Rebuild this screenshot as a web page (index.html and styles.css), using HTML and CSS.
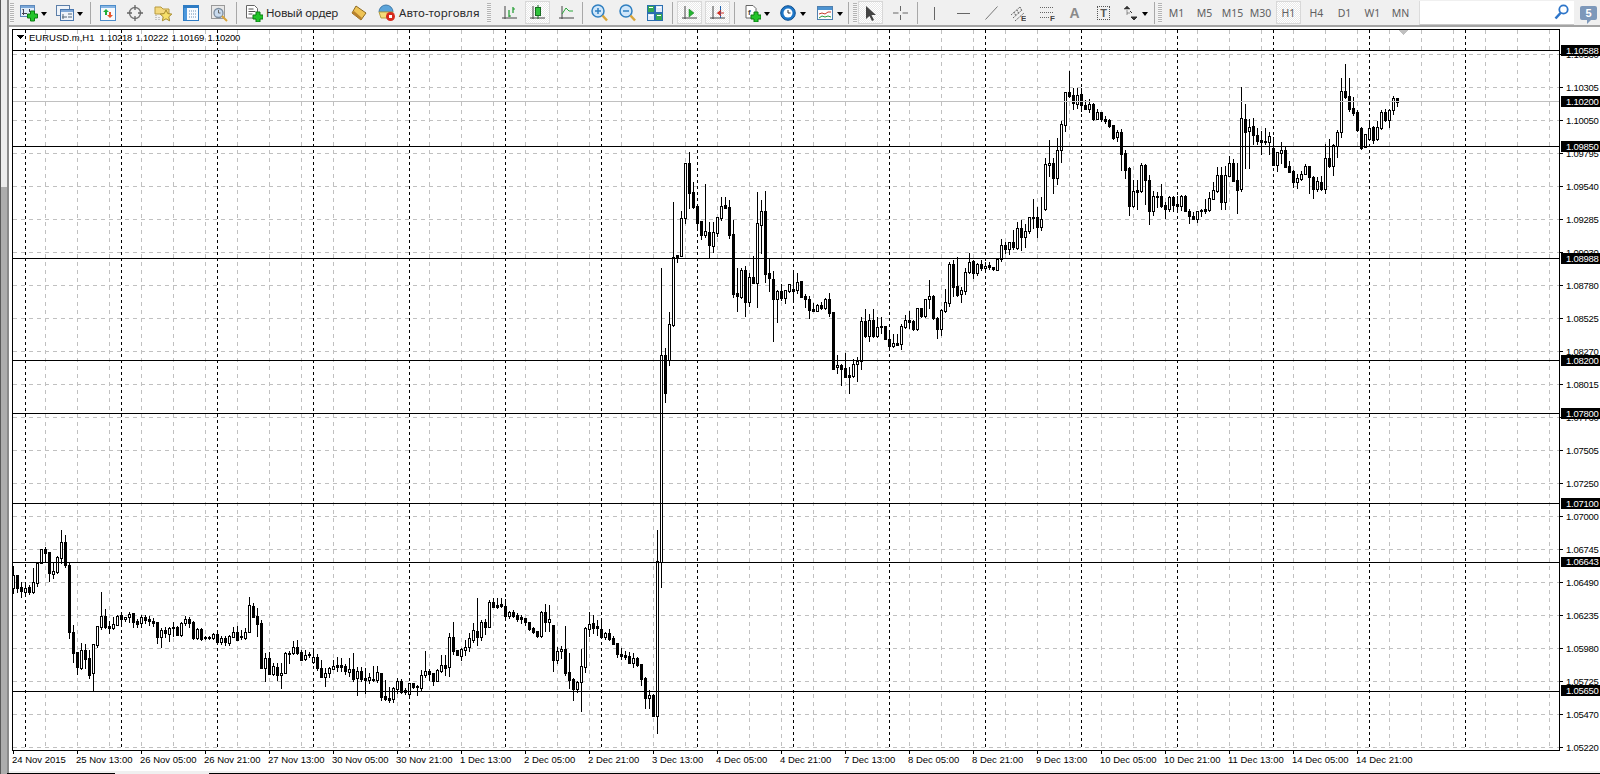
FILE: index.html
```html
<!DOCTYPE html>
<html lang="ru">
<head>
<meta charset="utf-8">
<title>EURUSD.m,H1</title>
<link rel="stylesheet" href="styles.css">
</head>
<body>
<div class="app">
  <div class="rail"><div class="rail-edge"></div><div class="rail-track"><div class="rail-thumb"></div></div><div class="rail-side"></div></div>
  <div class="main">
    <div class="toolbar">
      <i class="handle g1"></i>
      <svg class="g6" width="18" height="18" viewBox="0 0 18 18"><rect x=".5" y="1.5" width="14" height="11" fill="#e2edf8" stroke="#5c88ba"/><rect x="1" y="2" width="13" height="2" fill="#79a6d8"/><path d="M3.5 5v6M2 9.5h5M3.5 5l-1 1M9.500 5v3" fill="none" stroke="#445"/><path d="M8 8.500h3v-3h4v3h3v4h-3v3h-4v-3H8z" transform="translate(-.5 1.500)" fill="#22c52a" stroke="#0b7d12"/></svg>
      <i class="caret g3"></i>
      <svg class="g9" width="18" height="18" viewBox="0 0 18 18"><rect x=".5" y="1.5" width="13" height="10" fill="#eef3f9" stroke="#5c7ea8"/><rect x="4.500" y="5.500" width="13" height="11" fill="#eef3f9" stroke="#4a78b0"/><rect x="5" y="6" width="12" height="2" fill="#7ea7d6"/><path d="M7 10v5M6 13h5M12 10h4M12 13h4" fill="none" stroke="#567"/></svg>
      <i class="caret g3"></i>
      <i class="sep g7"></i>
      <svg class="g9" width="16" height="18" viewBox="0 0 16 18"><rect x=".5" y="1.5" width="15" height="15" fill="#f6f9fd" stroke="#4d8cc9"/><rect x="1" y="2" width="14" height="2" fill="#86b5e4"/><path d="M6 5l3 3H7v3H5V8H3z" fill="#1fae3a"/><path d="M10 14l-3-3h2V8h2v3h2z" fill="#e8562b"/></svg>
      <svg class="g11" width="16" height="18" viewBox="0 0 16 18"><circle cx="8" cy="9" r="5.500" fill="none" stroke="#777" stroke-width="1.400"/><path d="M8 1v5M8 12v5M0 9h5M11 9h5" stroke="#666" stroke-width="1.300"/></svg>
      <svg class="g11" width="18" height="18" viewBox="0 0 18 18"><path d="M1 3h6l2 2h6v5H1z" fill="#f4d97f" stroke="#b79a3f"/><path d="M12 6l1.800 3.600 4 .5-3 2.700.8 4-3.600-2-3.600 2 .8-4-3-2.700 4-.5z" fill="#f6e06a" stroke="#a58a2c"/><path d="M2 11v6M5 13v4" stroke="#999" stroke-dasharray="1 1"/></svg>
      <svg class="g11" width="16" height="18" viewBox="0 0 16 18"><rect x=".5" y="1.500" width="15" height="15" fill="#f8fbff" stroke="#2f7cc4"/><rect x="1" y="2" width="14" height="2" fill="#2f7cc4"/><rect x="1" y="4" width="3" height="12" fill="#4b97dc"/><path d="M6 7h7M6 10h7M6 13h7" stroke="#6b8fb3" stroke-dasharray="1 1"/></svg>
      <svg class="g12" width="18" height="18" viewBox="0 0 18 18"><rect x=".5" y="1.500" width="13" height="13" fill="#e8e8e8" stroke="#9a9a9a"/><circle cx="7.500" cy="9" r="4.500" fill="#c9dbee" stroke="#7c8d9f" stroke-width="1.300"/><path d="M7.500 6v3h2" fill="none" stroke="#666"/><path d="M11 12l5 5" stroke="#d9a53a" stroke-width="2"/></svg>
      <i class="sep g7"></i>
      <span class="labelled g9"><svg width="17" height="18" viewBox="0 0 17 18"><path d="M.5 1.500h8l3 3V14H.5z" fill="#fff" stroke="#666"/><path d="M2.500 5h5M2.500 7.500h7M2.500 10h4" stroke="#555"/><path d="M7 11h3V8h4v3h3v4h-3v3h-4v-3H7z" fill="#22c52a" stroke="#0b7d12"/></svg><span class="tb-text w-order">Новый ордер</span></span>
      <svg class="g13" width="16" height="18" viewBox="0 0 16 18"><path d="M5 2l10 7-5 7L1 9z" fill="#efc456" stroke="#8d6a22"/><path d="M1 9l9 7 1-2L3 7z" fill="#b9822e"/></svg>
      <span class="labelled g11"><svg width="18" height="18" viewBox="0 0 18 18"><path d="M1 8a7 7 0 0 1 14 0z" fill="#5ba4da" stroke="#3d78a8"/><path d="M1 8h14l-1 6H3z" fill="#f5dc7a" stroke="#b7a043"/><circle cx="12.500" cy="12.500" r="4.500" fill="#d62a1e"/><rect x="11" y="11" width="3" height="3" fill="#fff"/></svg><span class="tb-text w-auto">Авто-торговля</span></span>
      <i class="handle g7"></i>
      <svg class="g11" width="15" height="18" viewBox="0 0 15 18"><path d="M3 2v13M0 14h15" stroke="#444"/><path d="M7 6v7M7 12h2M11 3v6M11 5h2" stroke="#1a9a2a" stroke-width="1.200"/></svg>
      <span class="press g8"><svg width="15" height="18" viewBox="0 0 15 18"><path d="M3 2v13M0 14h15" stroke="#444"/><path d="M8 1v14" stroke="#176d22"/><rect x="5.500" y="3.500" width="5" height="8" fill="#2fc23a" stroke="#176d22"/></svg></span>
      <svg class="g9" width="15" height="18" viewBox="0 0 15 18"><path d="M3 2v13M0 14h15" stroke="#444"/><path d="M3 10l4-6 3 3 4 0" fill="none" stroke="#2aa83a"/></svg>
      <i class="sep g8"></i>
      <svg class="g8" width="17" height="18" viewBox="0 0 17 18"><circle cx="7" cy="7" r="6" fill="#cfe6fa" stroke="#2f7fc0" stroke-width="1.500"/><path d="M7 4v6M4 7h6" stroke="#2f7fc0" stroke-width="1.500"/><path d="M11.500 11.500l4.500 5" stroke="#d8a53a" stroke-width="2.500"/></svg>
      <svg class="g11" width="17" height="18" viewBox="0 0 17 18"><circle cx="7" cy="7" r="6" fill="#cfe6fa" stroke="#2f7fc0" stroke-width="1.500"/><path d="M4 7h6" stroke="#2f7fc0" stroke-width="1.500"/><path d="M11.500 11.500l4.500 5" stroke="#d8a53a" stroke-width="2.500"/></svg>
      <svg class="g11" width="16" height="18" viewBox="0 0 16 18"><rect x=".5" y="1.500" width="7" height="7" fill="#34a853" stroke="#2b6fb0"/><rect x="8.500" y="1.500" width="7" height="7" fill="#dfeafa" stroke="#2b6fb0"/><rect x=".5" y="9.500" width="7" height="7" fill="#dfeafa" stroke="#2b6fb0"/><rect x="8.500" y="9.500" width="7" height="7" fill="#34a853" stroke="#2b6fb0"/><path d="M2 3.500h4M10 3.500h4M2 11.500h4M10 11.500h4" stroke="#fff"/></svg>
      <i class="sep g9"></i>
      <span class="press g4"><svg width="15" height="18" viewBox="0 0 15 18"><path d="M3 2v13M0 14h15" stroke="#444"/><path d="M7 5l5 4-5 4z" fill="#23b531" stroke="#177a20" stroke-width=".5"/></svg></span>
      <span class="press g3"><svg width="15" height="18" viewBox="0 0 15 18"><path d="M3 2v13M0 14h15" stroke="#444"/><path d="M10.500 2v12" stroke="#2264b0"/><path d="M14 9H8l3-2.500M8 9l3 2.500" fill="none" stroke="#d0281c" stroke-width="1.200"/></svg></span>
      <i class="sep g4"></i>
      <svg class="g10" width="16" height="18" viewBox="0 0 16 18"><path d="M1 1.500h7l3 3V14H1z" fill="#fff" stroke="#666"/><text x="3" y="11" class="ic-letter">f</text><path d="M6 11h3V8h4v3h3v4h-3v3H9v-3H6z" fill="#22c52a" stroke="#0b7d12"/></svg>
      <i class="caret g3"></i>
      <svg class="g10" width="16" height="18" viewBox="0 0 16 18"><circle cx="8" cy="9" r="7.300" fill="#1f78c9" stroke="#0f4f8f"/><circle cx="8" cy="9" r="4.500" fill="#fff"/><path d="M8 6v3h2.500" fill="none" stroke="#333"/></svg>
      <i class="caret g4"></i>
      <svg class="g11" width="16" height="18" viewBox="0 0 16 18"><rect x=".5" y="2.500" width="15" height="13" fill="#fdfdfd" stroke="#4e7fae"/><rect x="1" y="3" width="14" height="3" fill="#4d93d1"/><path d="M2 10l3-1 3 1 3-2 3 0" fill="none" stroke="#c83b2a"/><path d="M2 14l3-2 3 1 3-1 3 1" fill="none" stroke="#2d9a3a"/></svg>
      <i class="caret g4"></i>
      <i class="sep g5"></i>
      <i class="handle g4"></i>
      <span class="press g1"><svg width="15" height="18" viewBox="0 0 15 18"><path d="M3 2v13l3.500-3 2.500 5 2-1-2.500-5H13z" fill="#444"/></svg></span>
      <svg class="g10" width="15" height="18" viewBox="0 0 15 18"><path d="M7.500 2v5M7.500 11v5M0 9h5.500M9.500 9H15" stroke="#666"/></svg>
      <i class="sep g9"></i>
      <svg class="g9" width="15" height="18" viewBox="0 0 15 18"><path d="M7.500 3v13" stroke="#666"/></svg>
      <svg class="g15" width="13" height="18" viewBox="0 0 13 18"><path d="M0 9.500h13" stroke="#666"/></svg>
      <svg class="g15" width="13" height="18" viewBox="0 0 13 18"><path d="M.5 15.500l12-13" stroke="#777"/></svg>
      <svg class="g13" width="15" height="18" viewBox="0 0 15 18"><path d="M0 11l9-8M2 14l9-8M4 17l9-8M3 8l2 4M6 6l2 4M9 3l2 4" stroke="#666" stroke-dasharray="1.500 .7" fill="none"/><text x="10" y="17" class="ic-letter">E</text></svg>
      <svg class="g14" width="15" height="18" viewBox="0 0 15 18"><path d="M0 3.500h14M0 8.500h14M0 13.500h9" stroke="#666" stroke-dasharray="1 1"/><text x="10" y="17" class="ic-letter">F</text></svg>
      <span class="glyph-a g13">A</span>
      <span class="glyph-t g16">T</span>
      <svg class="g14" width="13" height="18" viewBox="0 0 13 18"><path d="M3 2l3 3H0zM3 6v5M3 9l3 0" fill="#333" stroke="#333" stroke-width=".5"/><path d="M10 16l-3-3h6zM6 7l2 2" fill="#333" stroke="#333"/></svg>
      <i class="caret g5"></i>
      <i class="sep g6"></i>
      <i class="handle g3"></i>
      <span class="tf-row g2">
        <span class="tf">M1</span><span class="tf">M5</span><span class="tf">M15</span><span class="tf">M30</span><span class="tf tf-on">H1</span><span class="tf">H4</span><span class="tf">D1</span><span class="tf">W1</span><span class="tf">MN</span>
      </span>
      <label class="search">
        <svg width="15" height="16" viewBox="0 0 15 16"><circle cx="9.500" cy="5.500" r="4.200" fill="#fff" stroke="#2d75c9" stroke-width="1.800"/><path d="M6.500 9l-5 5.500" stroke="#2d75c9" stroke-width="2.600"/></svg>
      </label>
      <span class="badge">5</span>
    </div>
    <div class="rule"></div>
    <div class="chart-pane">
      <svg class="chart" width="1591" height="744" viewBox="9 27 1591 744">
        <path class="grid-h" d="M13 54.500H1559M13 87.500H1559M13 120.500H1559M13 153.500H1559M13 186.500H1559M13 219.500H1559M13 252.500H1559M13 285.500H1559M13 318.500H1559M13 351.500H1559M13 384.500H1559M13 417.500H1559M13 450.500H1559M13 483.500H1559M13 516.500H1559M13 549.500H1559M13 582.500H1559M13 615.500H1559M13 648.500H1559M13 681.500H1559M13 714.500H1559M13 747.500H1559"/>
        <path id="grid-gray" class="grid-v" d=""/>
        <path id="grid-black" class="grid-sep" d=""/>
        <path id="wicks-bodies" class="candle-black" d=""/>
        <path id="body-fill" class="candle-white" d=""/>
        <path class="bid" d="M13 101.500H1559"/>
        <path class="level" d="M13 50.500H1559M13 146.500H1559M13 258.500H1559M13 360.500H1559M13 413.500H1559M13 503.500H1559M13 562.500H1559M13 691.500H1559"/>
        <path class="frame" d="M12.500 29.500H1559.500V750.500H12.500z"/>
        <path class="shift-mark" d="M1398 30h11l-5.500 5z"/>
        <path class="tri" d="M16 35h8l-4 4z"/>
        <text x="29" y="41" class="t">EURUSD.m,H1</text>
        <text x="99.500" y="41" class="t num">1.10218</text>
        <text x="135.500" y="41" class="t num">1.10222</text>
        <text x="171.500" y="41" class="t num">1.10169</text>
        <text x="207.500" y="41" class="t num">1.10200</text>
        <path class="ticks" d="M1560 54.500h3M1560 87.500h3M1560 120.500h3M1560 153.500h3M1560 186.500h3M1560 219.500h3M1560 252.500h3M1560 285.500h3M1560 318.500h3M1560 351.500h3M1560 384.500h3M1560 417.500h3M1560 450.500h3M1560 483.500h3M1560 516.500h3M1560 549.500h3M1560 582.500h3M1560 615.500h3M1560 648.500h3M1560 681.500h3M1560 714.500h3M1560 747.500h3M13.500 751v3M77.500 751v3M141.500 751v3M205.500 751v3M269.500 751v3M333.500 751v3M397.500 751v3M461.500 751v3M525.500 751v3M589.500 751v3M653.500 751v3M717.500 751v3M781.500 751v3M845.500 751v3M909.500 751v3M973.500 751v3M1037.500 751v3M1101.500 751v3M1165.500 751v3M1229.500 751v3M1293.500 751v3M1357.500 751v3"/>
        <g class="t num">
          <text x="1566" y="58">1.10560</text><text x="1566" y="91">1.10305</text><text x="1566" y="124">1.10050</text><text x="1566" y="157">1.09795</text><text x="1566" y="190">1.09540</text><text x="1566" y="223">1.09285</text><text x="1566" y="256">1.09030</text><text x="1566" y="289">1.08780</text><text x="1566" y="322">1.08525</text><text x="1566" y="355">1.08270</text><text x="1566" y="388">1.08015</text><text x="1566" y="421">1.07760</text><text x="1566" y="454">1.07505</text><text x="1566" y="487">1.07250</text><text x="1566" y="520">1.07000</text><text x="1566" y="553">1.06745</text><text x="1566" y="586">1.06490</text><text x="1566" y="619">1.06235</text><text x="1566" y="652">1.05980</text><text x="1566" y="685">1.05725</text><text x="1566" y="718">1.05470</text><text x="1566" y="751">1.05220</text>
        </g>
        <path class="lab-box" d="M1561 45h39v10.500h-39zM1561 96h39v11h-39zM1561 141h39v11h-39zM1561 253h39v11h-39zM1561 355h39v11h-39zM1561 408h39v11h-39zM1561 498h39v11h-39zM1561 557h39v10h-39zM1561 685h39v11h-39z"/>
        <g class="t num price-on">
          <text x="1566" y="54">1.10588</text><text x="1566" y="105">1.10200</text><text x="1566" y="150">1.09850</text><text x="1566" y="262">1.08988</text><text x="1566" y="364">1.08200</text><text x="1566" y="417">1.07800</text><text x="1566" y="507">1.07100</text><text x="1566" y="565">1.06643</text><text x="1566" y="694">1.05650</text>
        </g>
        <g class="t">
          <text x="12" y="763">24 Nov 2015</text><text x="76" y="763">25 Nov 13:00</text><text x="140" y="763">26 Nov 05:00</text><text x="204" y="763">26 Nov 21:00</text><text x="268" y="763">27 Nov 13:00</text><text x="332" y="763">30 Nov 05:00</text><text x="396" y="763">30 Nov 21:00</text><text x="460" y="763">1 Dec 13:00</text><text x="524" y="763">2 Dec 05:00</text><text x="588" y="763">2 Dec 21:00</text><text x="652" y="763">3 Dec 13:00</text><text x="716" y="763">4 Dec 05:00</text><text x="780" y="763">4 Dec 21:00</text><text x="844" y="763">7 Dec 13:00</text><text x="908" y="763">8 Dec 05:00</text><text x="972" y="763">8 Dec 21:00</text><text x="1036" y="763">9 Dec 13:00</text><text x="1100" y="763">10 Dec 05:00</text><text x="1164" y="763">10 Dec 21:00</text><text x="1228" y="763">11 Dec 13:00</text><text x="1292" y="763">14 Dec 05:00</text><text x="1356" y="763">14 Dec 21:00</text>
        </g>
      </svg>
    </div>
    <div class="status"><i class="tab-a"></i><i class="tab-b"></i></div>
  </div>
</div>
<script src="script.js"></script>
</body>
</html>
```
FILE: styles.css
```css
* { box-sizing: border-box; }
html, body { margin: 0; padding: 0; background: #f0f0f0; overflow: hidden; }
body { font-family: "Noto Sans", "Liberation Sans", sans-serif; }
i { display: block; font-style: normal; }
.app { display: flex; width: 1600px; height: 774px; overflow: hidden; }
.rail { display: flex; width: 9px; flex: none; }
.rail-edge { width: 1px; background: #5a5a5a; }
.rail-track { width: 6px; background: #adadad; }
.rail-thumb { height: 187px; background: #ececec; }
.rail-side { width: 2px; background: #8a8a8a; }
.main { display: flex; flex-direction: column; flex: 1; min-width: 0; }

.toolbar { display: flex; align-items: center; height: 25px; flex: none; background: #f0f0f0; color: #2b2b2b; font-size: 11.500px; }
.toolbar > * { flex: none; }
.g1 { margin-left: 1px; } .g2 { margin-left: 2px; } .g3 { margin-left: 3px; } .g4 { margin-left: 4px; }
.g5 { margin-left: 5px; } .g6 { margin-left: 6px; } .g7 { margin-left: 7px; } .g8 { margin-left: 8px; }
.g9 { margin-left: 9px; } .g10 { margin-left: 10px; } .g11 { margin-left: 11px; } .g12 { margin-left: 12px; }
.g13 { margin-left: 13px; } .g14 { margin-left: 14px; } .g15 { margin-left: 15px; } .g16 { margin-left: 16px; }
.handle { width: 4px; height: 20px; background: repeating-linear-gradient(#b4b4b4 0 1px, #f6f6f6 1px 2px); }
.sep { width: 1px; height: 22px; background: #a8a8a8; }
.caret { width: 0; height: 0; border-left: 3.500px solid transparent; border-right: 3.500px solid transparent; border-top: 4px solid #000; margin-top: 2px; }
.labelled { display: flex; align-items: center; gap: 3px; }
.tb-text { display: block; white-space: nowrap; }
.w-order { width: 72px; letter-spacing: -.25px; }
.w-auto { width: 81px; letter-spacing: .05px; }
.press, .tf-on { background-color: #f8f8f8; background-image: repeating-conic-gradient(#fff 0 25%, #e9e9e9 0 50%); background-size: 2px 2px; border: 1px solid #fff; outline: 1px solid #d8d8d8; outline-offset: -1px; }
.press { display: flex; align-items: center; justify-content: center; width: 25px; height: 23px; }
.ic-letter { font: bold 8px "Liberation Sans", sans-serif; fill: #444; }
.glyph-a { width: 13px; text-align: center; font: bold 14px "Liberation Sans", sans-serif; color: #8a8a8a; }
.glyph-t { width: 13px; height: 14px; text-align: center; font: bold 11px/12px "Liberation Sans", sans-serif; color: #555; border: 1px dotted #555; }
.tf-row { display: flex; gap: 3px; }
.tf { display: flex; align-items: center; justify-content: center; width: 25px; height: 23px; font-size: 10.500px; color: #606060; }
.search { display: flex; align-items: center; justify-content: flex-end; width: 155px; height: 24px; margin-left: 6px; padding-right: 5px; background: #fff; border-left: 1px solid #dcdcdc; border-bottom: 1px solid #c8c8c8; }
.badge { position: relative; width: 17px; height: 14px; margin-left: 6px; text-align: center; font: bold 11px/14px "Liberation Sans", sans-serif; color: #fff; background: #7d98ba; border-radius: 2px; }
.badge::after { content: ""; position: absolute; left: 7px; top: 14px; border-left: 4px solid #7d98ba; border-bottom: 4px solid transparent; }
.rule { height: 2px; flex: none; background: #a4a4a4; }

.chart-pane { height: 744px; flex: none; background: #fff; }
.chart { display: block; shape-rendering: crispEdges; }
.grid-h, .grid-v { fill: none; stroke: #c0c0c0; stroke-width: 1; stroke-dasharray: 4 4; }
.grid-sep { fill: none; stroke: #000; stroke-width: 1; stroke-dasharray: 3 3; }
.candle-black { fill: #000; }
.candle-white { fill: #fff; }
.bid { stroke: #c0c0c0; fill: none; }
.level { stroke: #000; fill: none; }
.frame { fill: none; stroke: #000; }
.shift-mark { fill: #c0c0c0; }
.tri { fill: #000; }
.ticks { stroke: #000; fill: none; }
.lab-box { fill: #000; }
.t { font-family: "Liberation Sans", sans-serif; font-size: 9.500px; fill: #000; }
.num { letter-spacing: -.25px; }
.price-on { fill: #fff; }
.status { position: relative; flex: none; height: 3px; background: #f0f0f0; }
.tab-a { position: absolute; left: -2px; bottom: 0; width: 108px; height: 1px; background: #000; }
.tab-b { position: absolute; left: 200px; bottom: 0; right: 0; height: 1px; background: #000; }
```
FILE: script.js
```js
// Candle data read in 3x crop units: [high, bodyTop, bodyBottom, low, bullish]
var seg1 = [[138,165,205,218,1],[165,165,205,215,0],[186,202,212,230,0],[188,205,215,225,1],[195,202,215,223,0],[144,187,215,220,1],[125,128,188,197,1],[87,87,130,130,1],[80,88,98,125,0],[97,97,160,183,0],[125,153,161,175,1],[108,110,155,160,1],[30,67,113,128,1],[45,67,135,140,0],[128,135,335,355,0],[315,335,398,425,0],[395,395,440,462,0],[368,390,444,448,1],[372,390,416,445,0],[390,414,466,474,0],[372,372,460,514,1],[318,318,375,380,1],[216,289,320,328,1],[267,288,320,325,0],[304,318,323,340,0],[290,313,323,326,1],[285,288,314,316,1],[283,286,298,318,0],[290,292,298,302,1],[275,281,292,305,1],[278,280,305,320,0],[296,303,311,320,0],[284,292,310,322,1],[285,292,299,310,0],[288,297,304,315,0],[294,303,308,318,0],[306,307,352,368,0],[323,330,352,380,1],[320,331,340,350,0],[322,324,341,362,1],[305,322,325,347,0],[318,320,345,345,0],[305,310,345,347,1],[288,297,310,315,1],[292,297,310,322,0],[304,306,354,358,0],[325,327,354,356,1],[325,327,357,360,0],[349,351,355,358,0],[349,351,355,358,0],[340,342,355,358,1],[338,342,366,372,0],[348,355,366,372,1],[349,353,367,375,0],[345,348,368,376,1],[322,337,350,352,1],[318,335,359,360,0],[330,348,352,358,0],[325,335,353,356,1],[231,256,335,337,1],[250,258,290,292,0],[265,288,311,348,0],[300,310,443,445,0],[400,415,443,484,1],[395,414,461,462,0],[430,438,461,465,1],[430,442,464,480,0],[430,458,464,503,1],[396,399,458,460,1],[392,398,401,428,0],[362,382,400,403,1],[360,382,398,402,0],[390,397,420,420,0],[390,405,418,420,1],[395,403,406,412,0],[390,412,425,430,1],[403,412,445,450,0],[420,445,470,472,0],[443,460,470,497,1],[440,444,460,470,1],[420,438,447,448,1],[410,436,440,452,0],[415,436,440,452,0],[433,438,452,462,0],[415,447,456,468,1],[400,447,478,482,0],[440,453,474,525,1],[440,453,476,484,0],[445,475,480,520,0],[458,472,480,490,1],[438,476,480,482,0],[438,456,480,485,1],[458,459,531,540,0],[480,529,537,540,0],[500,534,540,545,0],[502,505,538,545,1],[475,484,507,520,1],[478,483,515,518,0],[505,511,517,522,0],[490,490,521,528,1],[488,489,502,503,0],[495,497,502,525,0],[450,466,503,510,1],[392,454,466,470,1],[448,454,462,480,0],[458,459,482,495,0],[448,450,482,484,1],[405,435,452,455,1],[405,436,443,465,0],[340,351,442,468,1],[306,351,392,403,0],[390,390,404,405,0],[385,388,407,420,1],[360,380,390,405,1],[338,355,380,393,1],[308,331,360,365,1],[235,333,350,375,0],[300,307,350,360,1],[298,306,320,342,0],[240,246,320,322,1],[235,247,260,262,0],[235,256,260,265,0],[235,253,257,262,0],[238,258,287,290,0],[272,277,287,295,1],[270,277,287,290,0],[280,286,298,302,0],[285,292,298,308,0],[295,295,306,315,0],[305,306,327,330,0],[322,324,336,340,0],[332,334,348,352,0],[272,276,348,350,1],[253,277,305,333,0],[255,298,305,333,1],[315,316,420,452,0],[380,392,419,428,1],[378,387,394,415,1],[318,387,459,465,0],[400,457,480,505,0],[474,477,506,540,0],[484,487,506,515,1],[387,439,487,572,1],[320,323,440,455,1],[275,313,326,347,1],[285,310,323,340,0],[300,319,323,345,0],[295,328,350,352,0],[335,340,350,358,1],[328,340,356,360,0],[348,355,372,373,0],[368,370,401,410,0],[385,401,409,416,0],[392,405,410,416,0],[395,408,428,430,0],[400,415,428,440,1],[412,415,435,437,0],[432,433,476,495,0],[472,474,533,565,0],[510,526,533,565,1],[523,525,587,587,0],[30,124,587,638,1]];
var seg2 = [[384,645,1266,1341,1],[624,645,759,786,0],[516,553,660,675,1],[187,350,555,558,1],[346,346,350,365,0],[212,235,347,348,1],[68,70,235,248,1],[37,70,158,203,0],[125,157,202,205,0],[198,198,248,270,0],[244,244,285,298,0],[132,274,285,292,1],[247,275,315,355,0],[247,277,318,336,1],[232,232,278,288,1],[172,199,233,240,1],[170,196,204,205,0],[180,202,285,295,0],[240,283,462,470,0],[385,460,468,513,0],[385,391,470,475,1],[378,391,485,527,0],[400,412,485,498,1],[348,412,428,430,0],[157,250,428,500,1],[180,214,254,340,1],[153,214,402,425,0],[355,400,415,452,0],[392,417,476,603,0],[450,454,476,545,1],[432,453,474,480,0],[450,451,473,490,1],[432,433,453,455,1],[398,448,452,486,0],[400,427,450,460,1],[424,424,470,472,0],[462,469,478,500,0],[468,477,510,533,0],[490,508,512,512,0],[492,494,512,514,1],[487,495,503,508,0],[475,478,504,507,1],[460,477,518,527,0],[516,516,686,688,0],[645,676,682,698,1],[672,674,686,735,0],[640,685,710,712,0],[680,705,710,758,0],[657,673,708,710,1],[652,663,673,722,1],[530,544,662,688,1],[507,543,587,590,0],[523,541,587,602,1],[507,541,587,590,0],[532,561,587,590,1],[530,558,562,580,0],[558,559,596,598,0],[570,598,617,630,0],[582,610,617,620,1],[582,610,614,616,0],[552,559,613,626,1],[525,541,560,563,1],[512,541,545,563,0],[540,543,567,570,0],[503,505,566,570,1],[503,504,528,530,0],[476,478,527,530,1],[420,468,478,503,1],[466,468,535,537,0],[530,533,567,595,0],[508,510,566,585,1],[447,487,512,515,1],[365,373,488,498,1],[360,373,440,468,0],[350,438,465,468,0],[440,451,463,485,1],[385,395,452,463,1],[338,365,396,398,1],[360,364,399,413,0],[368,372,398,405,1]];
var seg3 = [[630,643,655,660,0],[635,647,653,660,1],[635,645,652,658,0],[650,652,657,660,0],[625,628,660,660,1],[567,586,628,632,1],[575,586,598,610,0],[575,577,598,612,1],[540,577,592,598,0],[515,535,593,597,1],[510,535,561,600,0],[522,544,560,592,1],[502,502,544,548,1],[447,500,505,535,0],[472,500,530,560,0],[440,506,530,540,1],[325,343,478,480,1],[270,338,345,378,1],[325,338,383,428,0],[265,301,383,402,1],[212,223,301,335,1],[127,127,224,242,1],[63,127,137,140,0],[115,135,160,178,0],[115,135,162,175,1],[115,133,165,182,0],[150,166,176,178,0],[148,163,177,185,1],[158,162,207,210,0],[178,187,207,208,1],[185,187,208,212,0],[198,208,212,218,0],[208,211,227,230,0],[225,225,264,268,0],[240,247,262,272,1],[238,247,311,360,0],[300,310,359,383,0],[350,353,467,494,0],[390,424,467,470,1],[390,421,425,476,0],[340,346,424,425,1],[343,346,391,463,0],[375,391,482,523,0],[422,439,482,494,1],[425,437,440,472,0],[402,438,469,472,0],[455,466,476,505,0],[438,441,476,483,1],[438,442,464,484,0],[438,463,467,484,0],[435,438,467,480,1],[435,438,482,484,0],[477,482,498,518,0],[485,497,506,508,0],[482,484,506,515,1],[478,480,484,498,0],[447,478,482,490,0],[425,445,480,482,1],[395,420,446,447,1],[350,376,422,425,1],[350,376,455,478,0],[348,376,455,478,1],[318,340,377,378,1],[328,340,392,393,0],[340,391,420,488,0],[112,205,418,422,1],[163,207,245,355,0],[208,230,242,355,1],[205,229,254,282,0],[235,254,272,282,0],[243,271,275,312,0],[235,273,276,283,0],[245,259,275,313,1],[262,295,344,346,0],[305,307,344,362,1],[277,301,308,338,1],[292,300,350,352,0],[333,349,365,367,0],[360,363,396,410,0],[372,384,397,413,1],[362,371,386,390,1],[342,349,371,373,1],[348,349,382,428,0],[377,382,416,445,0],[380,394,416,422,1],[378,396,418,420,0],[282,325,418,428,1],[267,324,347,350,0],[282,286,347,375,1],[240,246,288,322,1],[85,124,247,260,1],[42,124,141,144,0],[85,139,177,182,0],[140,175,188,195,0],[180,187,240,242,0],[232,235,293,298,0],[252,253,291,292,1],[210,233,266,268,1],[228,231,270,278,0],[212,232,266,270,1],[180,187,234,236,1],[178,186,209,212,0],[178,181,209,232,1],[137,145,181,192,1],[143,145,155,167,0]];

var black = "", white = "", k = 0;
function addSeg(rows, y0) {
  rows.forEach(function (c) {
    var x = 13 + 4 * k;
    var y = function (v) { return Math.round(y0 + v / 3); };
    var hi = y(c[0]), top = y(c[1]), bot = y(c[2]) + 1, lo = y(c[3]) + 1;
    black += "M" + x + " " + hi + "h1V" + lo + "h-1z";
    black += "M" + (x - 1) + " " + top + "h3V" + bot + "h-3z";
    if (c[4] && bot - top > 2) white += "M" + x + " " + (top + 1) + "h1V" + (bot - 1) + "h-1z";
    k++;
  });
}
addSeg(seg1, 520);
addSeg(seg2, 140);
addSeg(seg3, 50);
document.getElementById("wicks-bodies").setAttribute("d", black);
document.getElementById("body-fill").setAttribute("d", white);

var g = "", s = "", x;
for (x = 45; x < 1559; x += 32) g += "M" + (x + 0.5) + " 30V750";
for (x = 25; x < 1559; x += 96) s += "M" + (x + 0.5) + " 30V750";
document.getElementById("grid-gray").setAttribute("d", g);
document.getElementById("grid-black").setAttribute("d", s);
```
